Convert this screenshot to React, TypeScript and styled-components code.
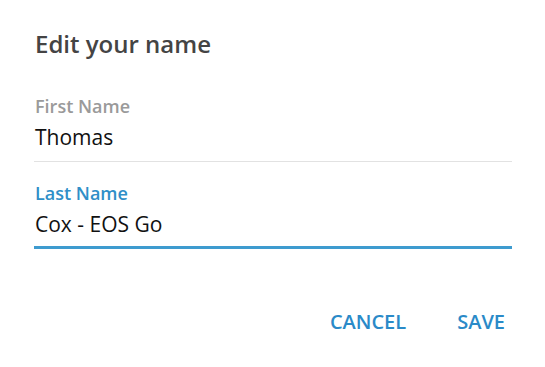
import React from 'react';
import styled, { createGlobalStyle } from 'styled-components';

const GlobalStyle = createGlobalStyle`
    html, body {
        margin: 0;
        padding: 0;
        background: #ffffff;
    }
    body {
        font-family: "Open Sans", "Noto Sans", sans-serif;
    }
`

const Dialog = styled.div`
    width: 545px;
    height: 367px;
    box-sizing: border-box;
    padding: 28px 33px 0 34px;
    display: flex;
    flex-direction: column;
    background: #ffffff;
`

const Title = styled.h2`
    margin: 0 0 34px 1px;
    font-size: 24px;
    font-weight: 600;
    line-height: 32px;
    color: #444444;
`

const Field = styled.div<{ focused?: boolean }>`
    display: flex;
    flex-direction: column;
    padding-bottom: ${({ focused }) => focused ? '7px' : '9px'};
    margin-bottom: 19px;
    border-bottom: ${({ focused }) => focused ? '3px solid #3e9bcf' : '1px solid #e2e2e2'};
`

const Label = styled.label<{ focused?: boolean }>`
    margin-left: 1px;
    font-size: 18px;
    font-weight: 600;
    line-height: 24px;
    color: ${({ focused }) => focused ? '#2f8fc8' : '#9a9a9a'};
`

const Value = styled.div`
    margin: 4px 0 0 1px;
    font-size: 21px;
    line-height: 30px;
    color: #111111;
`

const Actions = styled.div`
    display: flex;
    justify-content: flex-end;
    gap: 51px;
    margin-top: 41px;
    padding-right: 7px;
`

const TextButton = styled.button`
    border: none;
    background: transparent;
    padding: 0;
    font-family: "Open Sans", "Noto Sans", sans-serif;
    font-size: 20px;
    font-weight: 600;
    line-height: 26px;
    color: #2a8ac8;
    cursor: pointer;
`

const App = () => {
    return (
        <>
            <GlobalStyle />
            <Dialog>
                <Title>Edit your name</Title>
                <Field>
                    <Label>First Name</Label>
                    <Value>Thomas</Value>
                </Field>
                <Field focused>
                    <Label focused>Last Name</Label>
                    <Value>Cox - EOS Go</Value>
                </Field>
                <Actions>
                    <TextButton>CANCEL</TextButton>
                    <TextButton>SAVE</TextButton>
                </Actions>
            </Dialog>
        </>
    )
}

export default App;
